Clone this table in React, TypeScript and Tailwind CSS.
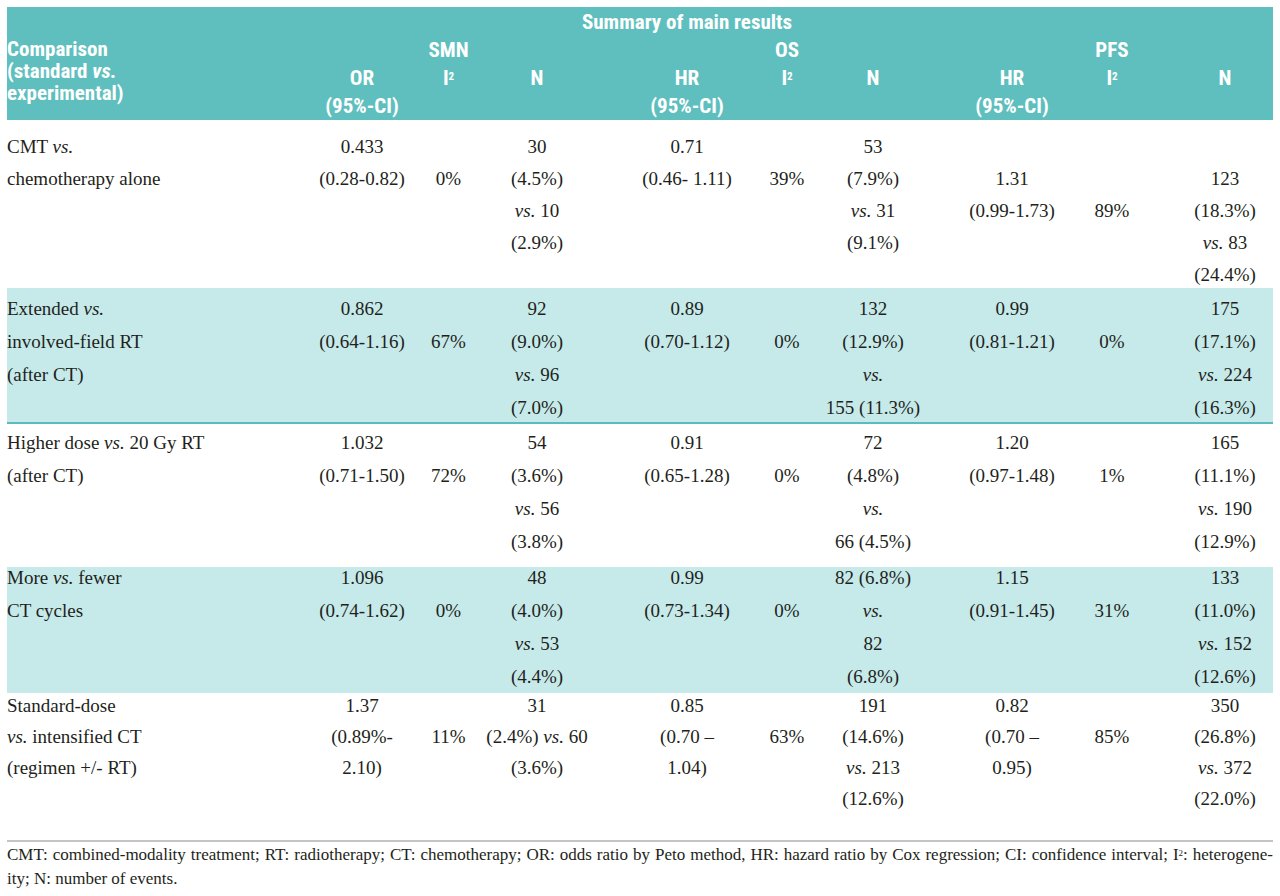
import React from "react";

type Cell = { s?: number; l: React.ReactNode[] };
type Row = { bg: string; off: string; lh: string; cells: Cell[] };

const COLS =
  "grid grid-cols-[293px_105px_87px_120px_125px_93px_112px_120px_106px_105px]";
const PAD = [
  "items-start text-left",
  "items-center pl-[19px]",
  "items-center",
  "items-center pr-[30px]",
  "items-center pl-[25px]",
  "items-center pl-[7px]",
  "items-center pr-[26px]",
  "items-center pl-[20px]",
  "items-center pr-[6px]",
  "items-center pl-[9px]",
];

const vs = <i>vs.</i>;
const V = (t: string) => (
  <>
    <i>vs.</i> {t}
  </>
);

const rows: Row[] = [
  {
    bg: "h-[168px] bg-white",
    off: "mt-[11px]",
    lh: "h-[32px] leading-[32px]",
    cells: [
      { l: [<>CMT {vs}</>, "chemotherapy alone"] },
      { l: ["0.433", "(0.28-0.82)"] },
      { s: 1, l: ["0%"] },
      { l: ["30", "(4.5%)", V("10"), "(2.9%)"] },
      { l: ["0.71", "(0.46- 1.11)"] },
      { s: 1, l: ["39%"] },
      { l: ["53", "(7.9%)", V("31"), "(9.1%)"] },
      { s: 1, l: ["1.31", "(0.99-1.73)"] },
      { s: 2, l: ["89%"] },
      { s: 1, l: ["123", "(18.3%)", V("83"), "(24.4%)"] },
    ],
  },
  {
    bg: "h-[136px] bg-[#c6eaea] border-b-2 border-[#5cbcbb]",
    off: "mt-[4px]",
    lh: "h-[33px] leading-[33px]",
    cells: [
      { l: [<>Extended {vs}</>, "involved-field RT", "(after CT)"] },
      { l: ["0.862", "(0.64-1.16)"] },
      { s: 1, l: ["67%"] },
      { l: ["92", "(9.0%)", V("96"), "(7.0%)"] },
      { l: ["0.89", "(0.70-1.12)"] },
      { s: 1, l: ["0%"] },
      { l: ["132", "(12.9%)", vs, "155 (11.3%)"] },
      { l: ["0.99", "(0.81-1.21)"] },
      { s: 1, l: ["0%"] },
      { l: ["175", "(17.1%)", V("224"), "(16.3%)"] },
    ],
  },
  {
    bg: "h-[143px] bg-white",
    off: "mt-[2px]",
    lh: "h-[33px] leading-[33px]",
    cells: [
      { l: [<>Higher dose {vs} 20 Gy RT</>, "(after CT)"] },
      { l: ["1.032", "(0.71-1.50)"] },
      { s: 1, l: ["72%"] },
      { l: ["54", "(3.6%)", V("56"), "(3.8%)"] },
      { l: ["0.91", "(0.65-1.28)"] },
      { s: 1, l: ["0%"] },
      { l: ["72", "(4.8%)", vs, "66 (4.5%)"] },
      { l: ["1.20", "(0.97-1.48)"] },
      { s: 1, l: ["1%"] },
      { l: ["165", "(11.1%)", V("190"), "(12.9%)"] },
    ],
  },
  {
    bg: "h-[126px] bg-[#c6eaea]",
    off: "-mt-[6px]",
    lh: "h-[33px] leading-[33px]",
    cells: [
      { l: [<>More {vs} fewer</>, "CT cycles"] },
      { l: ["1.096", "(0.74-1.62)"] },
      { s: 1, l: ["0%"] },
      { l: ["48", "(4.0%)", V("53"), "(4.4%)"] },
      { l: ["0.99", "(0.73-1.34)"] },
      { s: 1, l: ["0%"] },
      { l: ["82 (6.8%)", vs, "82", "(6.8%)"] },
      { l: ["1.15", "(0.91-1.45)"] },
      { s: 1, l: ["31%"] },
      { l: ["133", "(11.0%)", V("152"), "(12.6%)"] },
    ],
  },
  {
    bg: "h-[147px] bg-white",
    off: "-mt-[3px]",
    lh: "h-[31px] leading-[31px]",
    cells: [
      { l: ["Standard-dose", <>{vs} intensified CT</>, "(regimen +/- RT)"] },
      { l: ["1.37", "(0.89%-", "2.10)"] },
      { s: 1, l: ["11%"] },
      { l: ["31", <>(2.4%) {vs} 60</>, "(3.6%)"] },
      { l: ["0.85", "(0.70 –", "1.04)"] },
      { s: 1, l: ["63%"] },
      { l: ["191", "(14.6%)", V("213"), "(12.6%)"] },
      { l: ["0.82", "(0.70 –", "0.95)"] },
      { s: 1, l: ["85%"] },
      { l: ["350", "(26.8%)", V("372"), "(22.0%)"] },
    ],
  },
];

const I2 = () => (
  <span>
    I<sup className="text-[11px]">2</sup>
  </span>
);

export default function App() {
  return (
    <div className="w-[1280px] h-[896px] bg-white pl-[7px] pt-[7px] text-[#231f20] font-[family-name:Liberation_Serif,serif] overflow-hidden">
      <div className="w-[1266px]">
        {/* Header */}
        <div className="h-[113px] bg-[#5fbfbe] text-white font-bold text-[21px] [font-stretch:condensed] font-['Liberation_Sans_Narrow','Roboto_Condensed','DejaVu_Sans_Condensed','Liberation_Sans',sans-serif]">
          <div className={`${COLS} grid-rows-[28px_28px_28px_28px] pt-[1px] leading-[28px] whitespace-nowrap`}>
            <div className="col-start-1 col-span-10 row-start-1 text-center pl-[94px]">
              Summary of main results
            </div>
            <div className="col-start-1 row-start-2 row-span-3 leading-[22px] pt-[2px]">
              Comparison
              <br />
              (standard <i>vs.</i>
              <br />
              experimental)
            </div>
            <div className={`col-start-3 row-start-2 flex flex-col ${PAD[2]}`}>SMN</div>
            <div className={`col-start-6 row-start-2 flex flex-col ${PAD[5]}`}>OS</div>
            <div className={`col-start-9 row-start-2 flex flex-col ${PAD[8]}`}>PFS</div>

            <div className={`col-start-2 row-start-3 row-span-2 flex flex-col ${PAD[1]}`}>
              <div>OR</div>
              <div>(95%-CI)</div>
            </div>
            <div className={`col-start-3 row-start-3 flex flex-col ${PAD[2]}`}><I2 /></div>
            <div className={`col-start-4 row-start-3 flex flex-col ${PAD[3]}`}>N</div>
            <div className={`col-start-5 row-start-3 row-span-2 flex flex-col ${PAD[4]}`}>
              <div>HR</div>
              <div>(95%-CI)</div>
            </div>
            <div className={`col-start-6 row-start-3 flex flex-col ${PAD[5]}`}><I2 /></div>
            <div className={`col-start-7 row-start-3 flex flex-col ${PAD[6]}`}>N</div>
            <div className={`col-start-8 row-start-3 row-span-2 flex flex-col ${PAD[7]}`}>
              <div>HR</div>
              <div>(95%-CI)</div>
            </div>
            <div className={`col-start-9 row-start-3 flex flex-col ${PAD[8]}`}><I2 /></div>
            <div className={`col-start-10 row-start-3 flex flex-col ${PAD[9]}`}>N</div>
          </div>
        </div>

        {/* Body rows */}
        <div className="text-[19px]">
          {rows.map((r, ri) => (
            <div key={ri} className={`flex flex-col ${r.bg}`}>
              <div className={`${COLS} ${r.off}`}>
                {r.cells.map((c, i) => (
                  <div key={i} className={`flex flex-col whitespace-nowrap ${PAD[i]}`}>
                    {Array.from({ length: c.s ?? 0 }).map((_, k) => (
                      <div key={"e" + k} className={r.lh} />
                    ))}
                    {c.l.map((t, k) => (
                      <div key={k} className={r.lh}>
                        {t}
                      </div>
                    ))}
                  </div>
                ))}
              </div>
            </div>
          ))}
        </div>

        {/* Footnote */}
        <div className="border-t-2 border-[#c4c4c4] pt-[1px] text-[17px] leading-[24px]">
          <div className="[text-align-last:justify] whitespace-nowrap">
            CMT: combined-modality treatment; RT: radiotherapy; CT: chemotherapy; OR: odds ratio by Peto method, HR: hazard ratio by Cox regression; CI: confidence interval; I
            <sup className="text-[9px]">2</sup>: heterogene-
          </div>
          <div>ity; N: number of events.</div>
        </div>
      </div>
    </div>
  );
}
